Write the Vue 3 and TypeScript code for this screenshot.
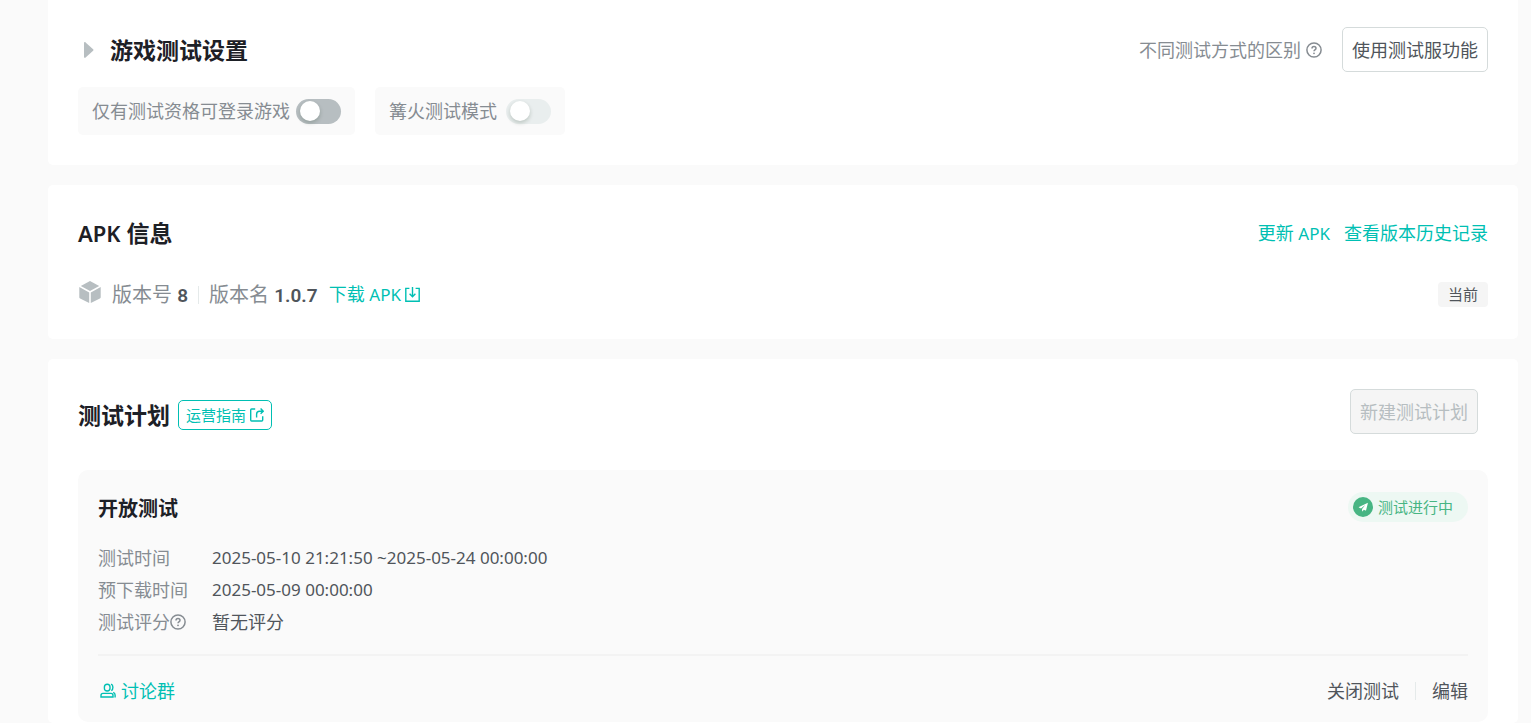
<script setup lang="ts">
import { ref } from 'vue'

interface PlanRow {
  label: string
  value: string
  help?: boolean
  cjk?: boolean
}

const restrictLogin = ref(false)
const bonfireMode = ref(false)

const rows: PlanRow[] = [
  { label: '测试时间', value: '2025-05-10 21:21:50 ~2025-05-24 00:00:00' },
  { label: '预下载时间', value: '2025-05-09 00:00:00' },
  { label: '测试评分', value: '暂无评分', help: true, cjk: true },
]
</script>

<template>
  <main class="page">
    <section class="card settings">
      <header class="settings-head">
        <button class="collapse" type="button" aria-label="展开">
          <svg width="10" height="16" viewBox="0 0 10 16"><path d="M0 1.2C0 .2 .9-.2 1.6.4L9.1 7.3a1 1 0 0 1 0 1.4L1.6 15.6C.9 16.2 0 15.8 0 14.8Z" fill="#b7bec1" /></svg>
        </button>
        <h2 class="title">游戏测试设置</h2>
        <a class="help-link" href="#">
          不同测试方式的区别
          <svg class="help" viewBox="0 0 16 16"><circle cx="8" cy="8" r="7.1" /><path d="M6 6.5c0-1.2.8-2 2-2s2 .8 2 1.8c0 .9-.5 1.2-1.1 1.6-.6.4-.9.7-.9 1.4" /><circle class="dot" cx="8" cy="11.3" r=".9" /></svg>
        </a>
        <button class="btn" type="button">使用测试服功能</button>
      </header>
      <div class="switches">
        <label class="switch-box">
          <span>仅有测试资格可登录游戏</span>
          <input v-model="restrictLogin" class="switch" type="checkbox" role="switch" />
        </label>
        <label class="switch-box">
          <span>篝火测试模式</span>
          <input v-model="bonfireMode" class="switch" type="checkbox" role="switch" disabled />
        </label>
      </div>
    </section>

    <section class="card apk">
      <header class="apk-head">
        <h2 class="title"><span class="title-latin">APK</span> 信息</h2>
        <nav class="apk-links">
          <a class="link" href="#">更新 <span class="latin">APK</span></a>
          <a class="link" href="#">查看版本历史记录</a>
        </nav>
      </header>
      <div class="apk-row">
        <svg class="cube" viewBox="0 0 22 22" fill="#b7bec1">
          <path d="M11 0 20.2 4.9 11 10 1.8 4.9Z" />
          <path d="M.3 6.1 10.2 11.6V22L1.1 17.4Q.3 17 .3 16.2Z" />
          <path d="M21.7 6.1 11.8 11.6V22l9.1-4.6q.8-.4.8-1.2Z" />
        </svg>
        <span class="meta">版本号 <b>8</b></span>
        <i class="bar" />
        <span class="meta">版本名 <b>1.0.7</b></span>
        <a class="link download" href="#">
          <span>下载 <span class="latin">APK</span></span>
          <svg width="15" height="15" viewBox="0 0 15 15"><path d="M4.4 1.4H.8v12.8h13.4V1.4h-3.6M7.5 0v9.6M4.6 6.8l2.9 2.9 2.9-2.9" /></svg>
        </a>
        <span class="badge">当前</span>
      </div>
    </section>

    <section class="card plan">
      <header class="plan-head">
        <div class="plan-title">
          <h2 class="title">测试计划</h2>
          <a class="guide" href="#">
            运营指南
            <svg width="14" height="14" viewBox="0 0 14 14"><path d="M5.2 1H1.6Q.7 1 .7 1.9v10.2q0 .9.9.9h10.2q.9 0 .9-.9V8.2M6.6 9.4V6.2q0-3 3-3h3.2M10.6.6l2.6 2.6-2.6 2.6" /></svg>
          </a>
        </div>
        <button class="btn" type="button" disabled>新建测试计划</button>
      </header>

      <article class="panel">
        <header class="panel-head">
          <h3>开放测试</h3>
          <span class="status">
            <svg width="20" height="20" viewBox="0 0 20 20"><circle cx="10" cy="10" r="10" fill="#47b583" /><path d="M14.4 5.9 6 10q-.5.3 0 .6l2 .8 4.2-3.4-3.1 3.9v2.2q.1.6.5.2l1.2-1.5 1.7.7q.5.2.6-.3l1.7-6.8q0-.7-.4-.5Z" fill="#fff" /></svg>
            测试进行中
          </span>
        </header>
        <dl class="rows">
          <div v-for="row in rows" :key="row.label" class="row">
            <dt>
              {{ row.label }}
              <svg v-if="row.help" class="help" viewBox="0 0 16 16"><circle cx="8" cy="8" r="7.1" /><path d="M6 6.5c0-1.2.8-2 2-2s2 .8 2 1.8c0 .9-.5 1.2-1.1 1.6-.6.4-.9.7-.9 1.4" /><circle class="dot" cx="8" cy="11.3" r=".9" /></svg>
            </dt>
            <dd :class="{ cjk: row.cjk }">{{ row.value }}</dd>
          </div>
        </dl>
        <footer class="panel-foot">
          <a class="link group" href="#">
            <svg width="16" height="16" viewBox="0 0 16 16"><path d="M4.4 4.1q0-2.8 2.8-2.8T10 4.1v1.2q0 2.7-2.8 2.7T4.4 5.3ZM1 14V12.4q0-2 2-2h8q2 0 2 2V14ZM11 1.2q1.9.7 1.9 3t-1.5 3.6M13.2 9.3q1.9.6 1.9 2.6v2.6" /></svg>
            讨论群
          </a>
          <button class="text-btn" type="button">关闭测试</button>
          <i class="bar" />
          <button class="text-btn" type="button">编辑</button>
        </footer>
      </article>
    </section>
  </main>
</template>

<style>
body {
  margin: 0;
  background: #fafafa;
}
</style>

<style scoped>
.page {
  box-sizing: border-box;
  min-height: 100vh;
  display: flex;
  flex-direction: column;
  gap: 20px;
  padding: 0 13px 0 48px;
  background: #fafafa;
  color: #50555b;
  font-family: "Noto Sans", "Noto Sans CJK SC", sans-serif;
  font-size: 18px;
  line-height: 30px;
}

.card {
  padding: 30px;
  background: #fff;
  border-radius: 5px;
}

.title,
h3 {
  margin: 0;
  color: #1d2026;
  font-size: 23px;
  line-height: 36px;
  font-weight: 600;
  white-space: nowrap;
}

.title-latin {
  font-size: 22px;
}

button {
  font-family: inherit;
  font-size: 18px;
  cursor: pointer;
}

a {
  text-decoration: none;
}

.btn {
  height: 45px;
  padding: 0 9px 2px;
  border: 1px solid #d5dbdb;
  border-radius: 5px;
  background: #fff;
  color: #50555b;
  white-space: nowrap;
}

.btn:disabled {
  background: #f5f5f5;
  color: #b7bec1;
  cursor: default;
}

.settings {
  padding-top: 27px;
  border-radius: 0 0 5px 5px;
}

.settings-head {
  display: flex;
  align-items: center;
}

.collapse {
  display: flex;
  padding: 0 16px 0 6px;
  border: 0;
  background: none;
}

.help-link {
  display: flex;
  align-items: center;
  gap: 5px;
  margin: 0 20px 0 auto;
  color: #868c92;
}

.help {
  flex: none;
  width: 16px;
  height: 16px;
  fill: none;
  stroke: #868c92;
  stroke-width: 1.5;
}

.help .dot {
  fill: #868c92;
  stroke: none;
}

.switches {
  display: flex;
  gap: 20px;
  margin-top: 15px;
}

.switch-box {
  display: flex;
  align-items: center;
  justify-content: space-between;
  gap: 6px;
  box-sizing: border-box;
  min-width: 190px;
  height: 48px;
  padding: 0 14px;
  border-radius: 5px;
  background: #fafafa;
  color: #868c92;
}

.switch {
  appearance: none;
  display: flex;
  align-items: center;
  box-sizing: border-box;
  width: 45px;
  height: 25px;
  margin: 0;
  padding: 0 4px;
  border-radius: 13px;
  background: #b7bec1;
}

.switch::before {
  content: "";
  width: 20px;
  height: 20px;
  border-radius: 50%;
  background: #fff;
  box-shadow: 0 2px 4px rgba(0, 35, 11, 0.2);
}

.switch:checked {
  justify-content: flex-end;
  background: #00bfb3;
}

.switch:disabled {
  background: #e9eeee;
}

.apk-head,
.plan-head,
.panel-head {
  display: flex;
  justify-content: space-between;
}

.apk-links {
  display: flex;
  align-items: center;
  gap: 14px;
}

.link {
  color: #00bfb3;
}

.latin {
  font-size: 17px;
}

.link svg,
.guide svg {
  fill: none;
  stroke: #00bfb3;
  stroke-width: 1.4;
}

.apk-row {
  display: flex;
  align-items: center;
  height: 29px;
  margin-top: 29px;
}

.cube {
  width: 22px;
  height: 22px;
  margin: 0 11px 5px 1px;
}

.meta {
  padding-top: 2px;
  color: #868c92;
  font-size: 20px;
}

.meta b {
  color: #50555b;
  font-family: Roboto, sans-serif;
  font-size: 19px;
  font-weight: 600;
}

.bar {
  width: 1px;
  height: 18px;
  background: #e5eaea;
}

.apk-row .bar {
  margin: 0 10px;
}

.download {
  display: flex;
  align-items: center;
  gap: 4px;
  margin-left: 11px;
}

.badge {
  margin-left: auto;
  padding: 0 10px;
  border-radius: 4px;
  background: #f5f5f5;
  font-size: 15px;
  line-height: 25px;
}

.plan {
  flex: 1;
  padding-bottom: 0;
}

.plan-head {
  align-items: flex-end;
  padding-right: 10px;
}

.plan-title {
  display: flex;
  align-items: center;
  gap: 8px;
  padding-bottom: 1px;
}

.guide {
  display: flex;
  align-items: center;
  gap: 4px;
  padding: 0 7px;
  border: 1px solid #00bfb3;
  border-radius: 5px;
  color: #00bfb3;
  font-size: 15px;
  line-height: 28px;
}

.panel {
  margin-top: 36px;
  padding: 22px 20px 16px;
  border-radius: 10px;
  background: #fafafa;
}

.panel-head {
  align-items: flex-start;
}

h3 {
  font-size: 20px;
  line-height: 34px;
}

.status {
  display: flex;
  align-items: center;
  gap: 5px;
  padding: 0 15px 0 5px;
  border-radius: 15px;
  background: #edf8f3;
  color: #47b583;
  font-size: 15px;
}

.rows {
  margin: 16px 0 0;
  padding-bottom: 16px;
  border-bottom: 2px solid #f3f3f3;
}

.row {
  display: flex;
  line-height: 32px;
}

.row dt {
  display: flex;
  align-items: center;
  width: 114px;
  color: #868c92;
}

.row dd {
  margin: 0;
  font-size: 17px;
}

.row dd.cjk {
  font-size: 18px;
}

.panel-foot {
  display: flex;
  align-items: center;
  gap: 16px;
  margin-top: 20px;
}

.group {
  display: flex;
  align-items: center;
  gap: 5px;
  margin: 0 auto 0 2px;
}

.text-btn {
  padding: 0;
  border: 0;
  background: none;
  color: #50555b;
  line-height: 30px;
}
</style>
